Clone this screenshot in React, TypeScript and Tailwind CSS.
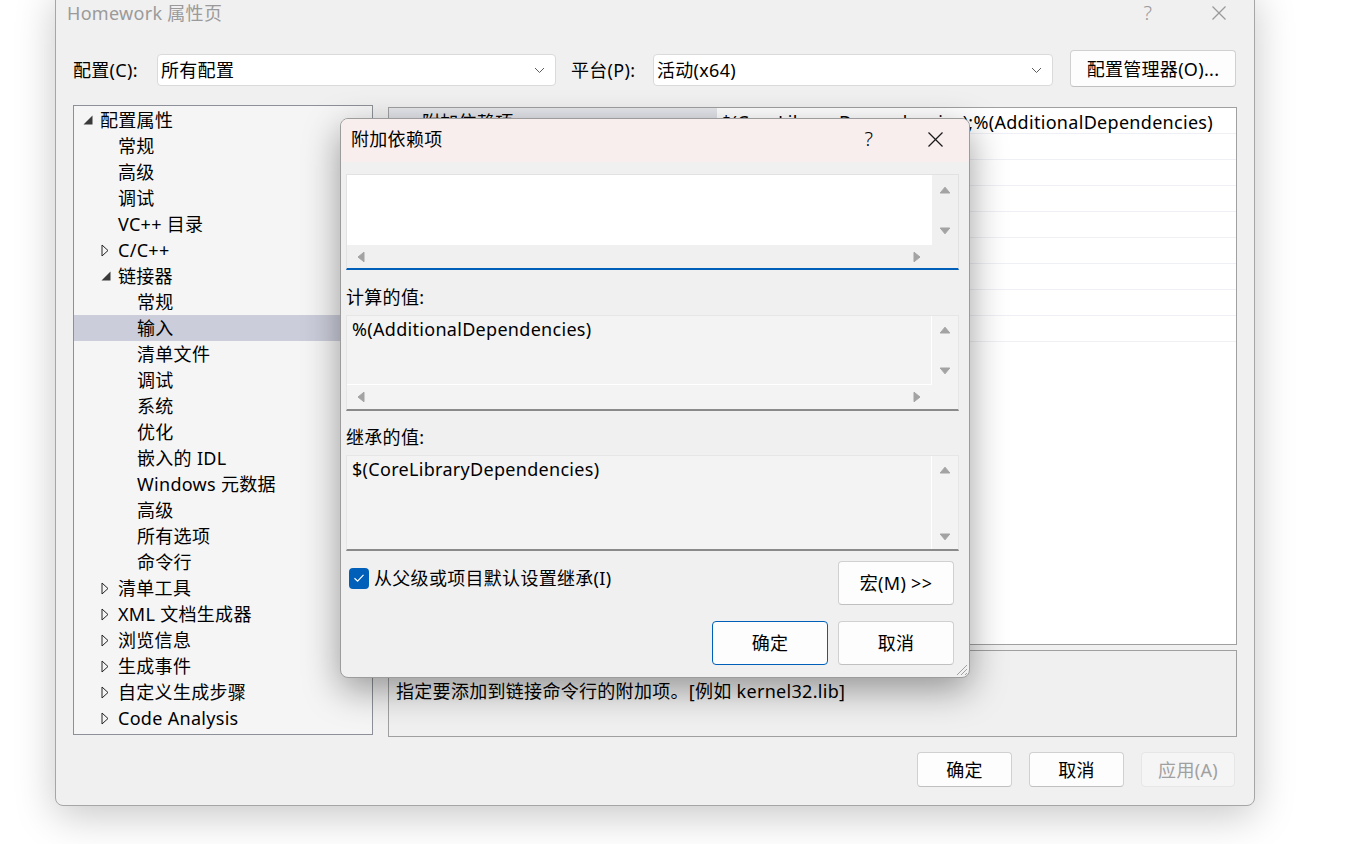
import React from "react";

const Chevron = () => (
  <svg width="11" height="7" viewBox="0 0 11 7">
    <polyline points="1,1 5.5,5.5 10,1" fill="none" stroke="#5c5c5c" strokeWidth="1" />
  </svg>
);

const XIcon = ({ color, size }: { color: string; size: number }) => (
  <svg width={size} height={size} viewBox={`0 0 ${size} ${size}`}>
    <line x1="0.5" y1="0.5" x2={size - 0.5} y2={size - 0.5} stroke={color} strokeWidth="1.3" />
    <line x1={size - 0.5} y1="0.5" x2="0.5" y2={size - 0.5} stroke={color} strokeWidth="1.3" />
  </svg>
);

const Up = () => (
  <svg width="12" height="8" viewBox="0 0 12 8">
    <path d="M6 1.2 L10.8 7 L1.2 7 Z" fill="#a3a3a3" stroke="#a3a3a3" strokeWidth="1" strokeLinejoin="round" />
  </svg>
);
const Down = () => (
  <svg width="12" height="8" viewBox="0 0 12 8">
    <path d="M1.2 1 L10.8 1 L6 6.8 Z" fill="#a3a3a3" stroke="#a3a3a3" strokeWidth="1" strokeLinejoin="round" />
  </svg>
);
const Left = () => (
  <svg width="8" height="12" viewBox="0 0 8 12">
    <path d="M1 6 L7 1.2 L7 10.8 Z" fill="#a3a3a3" stroke="#a3a3a3" strokeWidth="1" strokeLinejoin="round" />
  </svg>
);
const Right = () => (
  <svg width="8" height="12" viewBox="0 0 8 12">
    <path d="M7 6 L1 1.2 L1 10.8 Z" fill="#a3a3a3" stroke="#a3a3a3" strokeWidth="1" strokeLinejoin="round" />
  </svg>
);

const TriOpen = () => (
  <svg width="10" height="10" viewBox="0 0 10 10">
    <polygon points="9.5,0.5 9.5,9.5 0.5,9.5" fill="#3a3a3a" />
  </svg>
);
const TriClosed = () => (
  <svg width="8" height="13" viewBox="0 0 8 13">
    <polygon points="1,1 7,6.5 1,12" fill="none" stroke="#222" strokeWidth="1" strokeLinejoin="round" />
  </svg>
);

type Item = { t: string; lvl: number; tri?: "open" | "closed"; sel?: boolean };
const tree: Item[] = [
  { t: "配置属性", lvl: 0, tri: "open" },
  { t: "常规", lvl: 1 },
  { t: "高级", lvl: 1 },
  { t: "调试", lvl: 1 },
  { t: "VC++ 目录", lvl: 1 },
  { t: "C/C++", lvl: 1, tri: "closed" },
  { t: "链接器", lvl: 1, tri: "open" },
  { t: "常规", lvl: 2 },
  { t: "输入", lvl: 2, sel: true },
  { t: "清单文件", lvl: 2 },
  { t: "调试", lvl: 2 },
  { t: "系统", lvl: 2 },
  { t: "优化", lvl: 2 },
  { t: "嵌入的 IDL", lvl: 2 },
  { t: "Windows 元数据", lvl: 2 },
  { t: "高级", lvl: 2 },
  { t: "所有选项", lvl: 2 },
  { t: "命令行", lvl: 2 },
  { t: "清单工具", lvl: 1, tri: "closed" },
  { t: "XML 文档生成器", lvl: 1, tri: "closed" },
  { t: "浏览信息", lvl: 1, tri: "closed" },
  { t: "生成事件", lvl: 1, tri: "closed" },
  { t: "自定义生成步骤", lvl: 1, tri: "closed" },
  { t: "Code Analysis", lvl: 1, tri: "closed" },
];

const indentCls = ["w-[8px]", "w-[26px]", "w-[45px]"];

function TreeRow({ it }: { it: Item }) {
  return (
    <div className={`h-[26px] flex items-center ${it.sel ? "bg-[#cbcdda]" : ""}`}>
      <div className={`${indentCls[it.lvl]} shrink-0`} />
      <div className="w-[18px] shrink-0 flex items-center justify-start pl-[1px]">
        {it.tri === "open" ? <TriOpen /> : it.tri === "closed" ? <TriClosed /> : null}
      </div>
      <span className="whitespace-nowrap leading-[26px]">{it.t}</span>
    </div>
  );
}

const btn =
  "flex items-center justify-center rounded-[4px] border border-[#d0d0d0] border-b-[#c0c0c0] bg-[#fdfdfd] leading-[26px]";

export default function App() {
  return (
    <div className="relative w-[1372px] h-[844px] overflow-hidden bg-white text-black text-[18px] tracking-[0.3px] font-['Noto_Sans','Noto_Sans_CJK_SC',sans-serif]">
      {/* Main window */}
      <div className="ml-[55px] mt-[-12px] w-[1200px] h-[818px] flex flex-col rounded-[8px] border border-[#a6a6a6] bg-[#f0f0f0] shadow-[0_10px_40px_rgba(0,0,0,0.22)]">
        {/* title */}
        <div className="h-[46px] shrink-0 flex items-center pl-[11px] pr-[12px] pt-[1px]">
          <span className="flex-1 text-[#9a9a9a] leading-[22px] whitespace-nowrap">Homework 属性页</span>
          <div className="w-[40px] flex justify-center text-[#9a9a9a] text-[20px] font-light leading-[22px]">?</div>
          <div className="w-[28px]" />
          <div className="w-[46px] flex justify-center">
            <XIcon color="#9a9a9a" size={14} />
          </div>
        </div>

        {/* config row */}
        <div className="mt-[15px] h-[37px] shrink-0 flex items-start pl-[17px]">
          <div className="mt-[4px] h-[32px] w-[84px] flex items-center leading-[26px] whitespace-nowrap">配置(C):</div>
          <div className="mt-[4px] h-[32px] w-[399px] flex items-center justify-between rounded-[4px] border border-[#dadada] bg-white pl-[3px] pr-[10px]">
            <span className="leading-[26px]">所有配置</span>
            <Chevron />
          </div>
          <div className="mt-[4px] h-[32px] w-[82px] ml-[15px] flex items-center leading-[26px] whitespace-nowrap">平台(P):</div>
          <div className="mt-[4px] h-[32px] w-[400px] flex items-center justify-between rounded-[4px] border border-[#dadada] bg-white pl-[3px] pr-[10px]">
            <span className="leading-[26px]">活动(x64)</span>
            <Chevron />
          </div>
          <div className={`${btn} ml-[17px] w-[166px] h-[37px]`}>配置管理器(O)...</div>
        </div>

        {/* content */}
        <div className="mt-[18px] flex pl-[17px] pr-[17px] shrink-0">
          <div className="w-[300px] h-[630px] border border-[#8d9098] bg-[#f5f5f5] pt-[1px] overflow-hidden">
            {tree.map((it, i) => (
              <TreeRow key={i} it={it} />
            ))}
          </div>
          <div className="ml-[15px] w-[849px] mt-[2px] flex flex-col">
            <div className="h-[538px] border border-[#a0a0a0] bg-white">
              <div className="h-[26px] flex border-b border-[#eef0f5]">
                <div className="w-[328px] bg-gradient-to-b from-[#e6e7ec] to-[#d8dae0] pl-[33px] pt-[2px] leading-[24px] whitespace-nowrap overflow-hidden">
                  附加依赖项
                </div>
                <div className="flex-1 pl-[4px] pt-[2px] leading-[24px] whitespace-nowrap overflow-hidden">
                  $(CoreLibraryDependencies);%(AdditionalDependencies)
                </div>
              </div>
              {Array.from({ length: 8 }).map((_, i) => (
                <div key={i} className="h-[26px] border-b border-[#eef0f5]" />
              ))}
            </div>
            <div className="mt-[5px] h-[87px] border border-[#a0a0a0] bg-[#f0f0f0] pl-[7px] pt-[27px] leading-[26px] whitespace-nowrap">
              指定要添加到链接命令行的附加项。[例如 kernel32.lib]
            </div>
          </div>
        </div>

        {/* bottom buttons */}
        <div className="mt-[15px] flex justify-end pr-[19px] gap-[17px]">
          <div className={`${btn} w-[95px] h-[35px]`}>确定</div>
          <div className={`${btn} w-[95px] h-[35px]`}>取消</div>
          <div className="flex items-center justify-center rounded-[4px] border border-[#e6e6e6] bg-[#f5f5f5] w-[94px] h-[35px] text-[#a0a0a0] leading-[26px]">
            应用(A)
          </div>
        </div>
      </div>

      {/* Modal dialog */}
      <div className="absolute left-[340px] top-[118px] w-[630px] h-[560px] flex flex-col rounded-[8px] border border-[#9c9c9c] bg-[#f0f0f0] overflow-hidden shadow-[0_12px_36px_rgba(0,0,0,0.38)]">
        <div className="h-[43px] shrink-0 flex items-center bg-[#f9eeee] pl-[10px] pr-[11px] pb-[3px]">
          <span className="flex-1 leading-[24px]">附加依赖项</span>
          <div className="w-[40px] flex justify-center text-[20px] font-light leading-[24px]">?</div>
          <div className="w-[23px]" />
          <div className="w-[46px] flex justify-center">
            <XIcon color="#1a1a1a" size={15} />
          </div>
        </div>

        <div className="flex flex-col pl-[5px] pr-[10px] pt-[12px]">
          {/* box 1 */}
          <div className="h-[96px] flex border-t border-x border-[#e2e2e2] border-b-2 border-b-[#005fb8]">
            <div className="flex-1 flex flex-col">
              <div className="h-[70px] bg-white" />
              <div className="h-[23px] flex items-center justify-between pl-[10px] pr-[11px]">
                <Left />
                <Right />
              </div>
            </div>
            <div className="w-[26px] flex flex-col items-center pt-[11px]">
              <Up />
              <div className="h-[33px]" />
              <Down />
            </div>
          </div>

          <div className="mt-[14px] mb-[5px] h-[26px] leading-[26px]">计算的值:</div>

          {/* box 2 */}
          <div className="h-[96px] flex border-t border-x border-[#e6e6e6] border-b-2 border-b-[#8a8a8a] bg-[#f3f3f3]">
            <div className="flex-1 flex flex-col">
              <div className="h-[69px] border-r border-b border-white pl-[5px] leading-[26px] whitespace-nowrap">
                %(AdditionalDependencies)
              </div>
              <div className="h-[24px] flex items-center justify-between pl-[10px] pr-[11px]">
                <Left />
                <Right />
              </div>
            </div>
            <div className="w-[26px] flex flex-col items-center pt-[10px]">
              <Up />
              <div className="h-[33px]" />
              <Down />
            </div>
          </div>

          <div className="mt-[13px] mb-[5px] h-[26px] leading-[26px]">继承的值:</div>

          {/* box 3 */}
          <div className="h-[96px] flex border-t border-x border-[#e6e6e6] border-b-2 border-b-[#8a8a8a] bg-[#f3f3f3]">
            <div className="flex-1 border-r border-white pl-[5px] leading-[26px] whitespace-nowrap">
              $(CoreLibraryDependencies)
            </div>
            <div className="w-[26px] flex flex-col items-center pt-[10px]">
              <Up />
              <div className="h-[59px]" />
              <Down />
            </div>
          </div>

          {/* checkbox row */}
          <div className="mt-[10px] mr-[5px] flex items-start justify-between">
            <div className="mt-[4px] ml-[3px] flex items-center gap-[5px]">
              <div className="w-[20px] h-[21px] rounded-[4px] bg-[#005fb8] flex items-center justify-center">
                <svg width="12" height="10" viewBox="0 0 12 10">
                  <polyline points="1.5,5.2 4.6,8.2 10.5,1.8" fill="none" stroke="white" strokeWidth="1.2" />
                </svg>
              </div>
              <span className="leading-[26px] whitespace-nowrap">从父级或项目默认设置继承(I)</span>
            </div>
            <div className={`${btn} w-[116px] h-[44px]`}>宏(M) &gt;&gt;</div>
          </div>

          {/* ok cancel */}
          <div className="mt-[16px] mr-[5px] flex justify-end gap-[10px]">
            <div className="flex items-center justify-center rounded-[4px] border border-[#005fb8] bg-[#fdfdfd] w-[116px] h-[44px] leading-[26px]">
              确定
            </div>
            <div className={`${btn} w-[116px] h-[44px]`}>取消</div>
          </div>
        </div>

        {/* resize grip */}
        <div className="absolute right-[1px] bottom-[1px]">
          <svg width="14" height="14" viewBox="0 0 14 14">
            <line x1="13" y1="3" x2="3" y2="13" stroke="#a0a0a0" strokeWidth="1" />
            <line x1="13" y1="7" x2="7" y2="13" stroke="#a0a0a0" strokeWidth="1" />
            <line x1="13" y1="11" x2="11" y2="13" stroke="#a0a0a0" strokeWidth="1" />
          </svg>
        </div>
      </div>
    </div>
  );
}
